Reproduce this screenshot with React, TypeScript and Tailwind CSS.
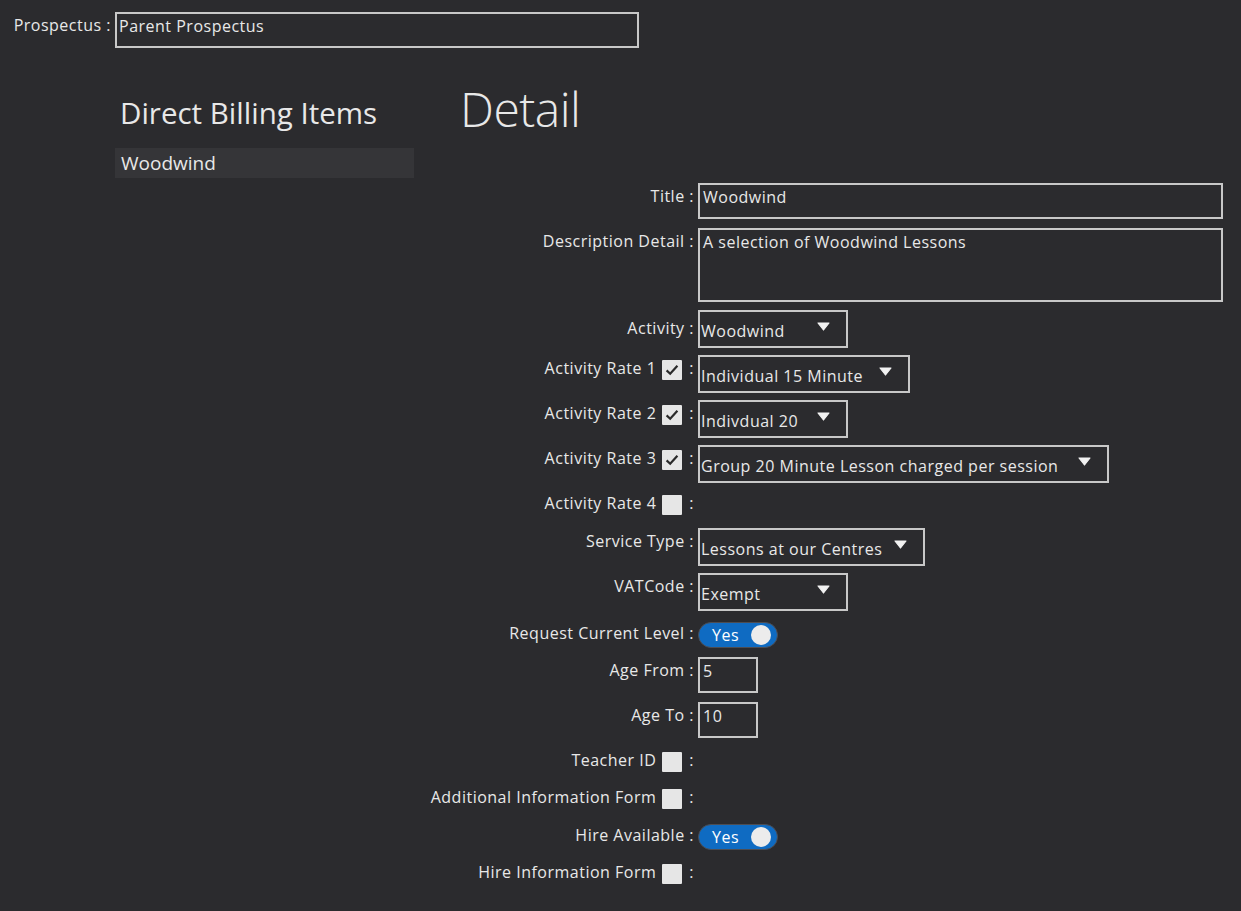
import React from "react";

const Arrow = () => (
  <svg width="13" height="9" viewBox="0 0 13 9" className="block">
    <path d="M1 1 H12 L6.5 8 Z" fill="#f2f2f2" stroke="#f2f2f2" strokeWidth="1.2" strokeLinejoin="round" />
  </svg>
);

const Check = ({ checked }: { checked?: boolean }) => (
  <span className="w-[20px] h-[20px] bg-[#e6e6e6] rounded-[1px] flex items-center justify-center shrink-0">
    {checked && (
      <svg width="14" height="12" viewBox="0 0 14 12" className="block">
        <path d="M1.6 6.4 L5.2 9.8 L12.4 1.8" fill="none" stroke="#2a2a2a" strokeWidth="2.2" />
      </svg>
    )}
  </span>
);

const Select = ({ w, text }: { w: string; text: string }) => (
  <div className={`${w} h-[38px] border-2 border-[#c8c8c8] flex items-start pl-[1px] pr-[16px] whitespace-nowrap`}>
    <span className="pt-[8px] leading-[22px]">{text}</span>
    <span className="ml-auto mt-[10px] pl-[10px]">
      <Arrow />
    </span>
  </div>
);

const Toggle = () => (
  <div className="mt-[2px] w-[80px] h-[26px] rounded-full bg-[#0f6bc2] border border-[#4d4d52] flex items-center pl-[13px] pr-[6px]">
    <span className="text-white leading-[20px]">Yes</span>
    <span className="ml-auto w-[20px] h-[20px] rounded-full bg-[#ececec]" />
  </div>
);

const Label = ({ text, top = "mt-[2px]" }: { text: string; top?: string }) => (
  <div className={`w-[280px] ${top} h-[22px] leading-[22px] flex justify-end whitespace-nowrap`}>{text} :</div>
);

const CheckLabel = ({ text, checked }: { text: string; checked?: boolean }) => (
  <div className="w-[280px] mt-[2px] h-[22px] leading-[22px] flex justify-end items-center whitespace-nowrap">
    <span>{text}</span>
    <span className="ml-[6px] mt-[3px]">
      <Check checked={checked} />
    </span>
    <span className="ml-[7px]">:</span>
  </div>
);

export default function App() {
  return (
    <div className="min-h-[911px] w-full bg-[#2b2b2e] text-[#e8e8e8] font-['Open_Sans','Noto_Sans',sans-serif] text-[16px] tracking-[0.5px]">
      <div className="flex items-start pt-[12px]">
        <div className="w-[115px] pr-[4px] mt-[2px] leading-[22px] text-right whitespace-nowrap">Prospectus :</div>
        <div className="w-[524px] h-[36px] border-2 border-[#c8c8c8] pl-[2px] pt-[1px] leading-[22px]">Parent Prospectus</div>
      </div>

      <div className="flex items-start">
        <div className="ml-[115px] w-[299px] flex flex-col">
          <div className="mt-[47px] pl-[5px] text-[29.5px] leading-[36px] tracking-normal whitespace-nowrap">Direct Billing Items</div>
          <div className="mt-[17px] h-[30px] bg-[#353538] pl-[6px] text-[19px] leading-[30px] tracking-normal">Woodwind</div>
        </div>

        <div className="flex flex-col">
          <div className="mt-[37px] ml-[46px] text-[48px] leading-[48px] font-light tracking-[-0.5px]">Detail</div>

          <div className="mt-[50px] flex flex-col">
            <div className="flex items-start">
              <Label text="Title" />
              <div className="ml-[4px] w-[525px] h-[36px] border-2 border-[#c8c8c8] pl-[3px] pt-[1px] leading-[22px]">Woodwind</div>
            </div>

            <div className="flex items-start mt-[9px]">
              <Label text="Description Detail" />
              <div className="ml-[4px] w-[525px] h-[74px] border-2 border-[#c8c8c8] pl-[3px] pt-[1px] leading-[22px]">A selection of Woodwind Lessons</div>
            </div>

            <div className="flex items-start mt-[8px]">
              <Label text="Activity" top="mt-[7px]" />
              <div className="ml-[4px]">
                <Select w="w-[150px]" text="Woodwind" />
              </div>
            </div>

            <div className="flex items-start mt-[7px]">
              <CheckLabel text="Activity Rate 1" checked />
              <div className="ml-[4px]">
                <Select w="w-[212px]" text="Individual 15 Minute" />
              </div>
            </div>

            <div className="flex items-start mt-[7px]">
              <CheckLabel text="Activity Rate 2" checked />
              <div className="ml-[4px]">
                <Select w="w-[150px]" text="Indivdual 20" />
              </div>
            </div>

            <div className="flex items-start mt-[7px]">
              <CheckLabel text="Activity Rate 3" checked />
              <div className="ml-[4px]">
                <Select w="w-[411px]" text="Group 20 Minute Lesson charged per session" />
              </div>
            </div>

            <div className="flex items-start mt-[7px] h-[31px]">
              <CheckLabel text="Activity Rate 4" />
            </div>

            <div className="flex items-start mt-[7px]">
              <Label text="Service Type" />
              <div className="ml-[4px]">
                <Select w="w-[227px]" text="Lessons at our Centres" />
              </div>
            </div>

            <div className="flex items-start mt-[7px]">
              <Label text="VATCode" />
              <div className="ml-[4px]">
                <Select w="w-[150px]" text="Exempt" />
              </div>
            </div>

            <div className="flex items-start mt-[9px] h-[30px]">
              <Label text="Request Current Level" />
              <div className="ml-[4px]">
                <Toggle />
              </div>
            </div>

            <div className="flex items-start mt-[7px]">
              <Label text="Age From" />
              <div className="ml-[4px] w-[60px] h-[36px] border-2 border-[#c8c8c8] pl-[3px] pt-[1px] leading-[22px]">5</div>
            </div>

            <div className="flex items-start mt-[9px]">
              <Label text="Age To" />
              <div className="ml-[4px] w-[60px] h-[36px] border-2 border-[#c8c8c8] pl-[3px] pt-[1px] leading-[22px]">10</div>
            </div>

            <div className="flex items-start mt-[9px] h-[30px]">
              <CheckLabel text="Teacher ID" />
            </div>

            <div className="flex items-start mt-[7px] h-[30px]">
              <CheckLabel text="Additional Information Form" />
            </div>

            <div className="flex items-start mt-[8px] h-[30px]">
              <Label text="Hire Available" />
              <div className="ml-[4px]">
                <Toggle />
              </div>
            </div>

            <div className="flex items-start mt-[7px] h-[30px]">
              <CheckLabel text="Hire Information Form" />
            </div>
          </div>
        </div>
      </div>
    </div>
  );
}
